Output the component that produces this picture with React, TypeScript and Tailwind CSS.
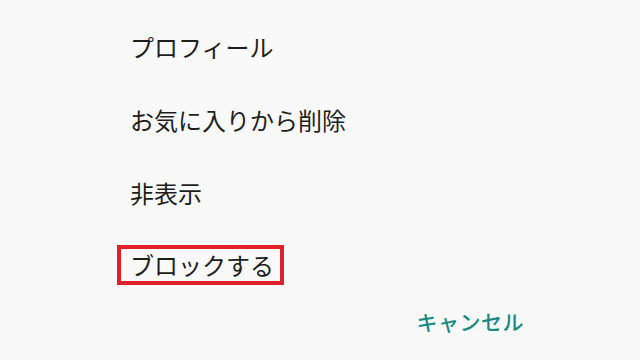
export default function App() {
  const items = ['プロフィール', 'お気に入りから削除', '非表示'];
  return (
    <div
      className="w-[640px] h-[360px] bg-[#f9f9f9] text-[#1e1e1e] overflow-hidden"
      style={{fontFamily: '"Noto Sans CJK JP", "Noto Sans", sans-serif'}}
    >
      <div className="flex flex-col pl-[130px] pt-[31px] gap-[41px]">
        {items.map(t => (
          <div key={t} className="text-[24px] leading-[32px]">{t}</div>
        ))}
        <div className="-mt-[5px] flex">
          <div className="-ml-[13px] h-[40px] flex items-center border-[4px] border-[#e0202a] pl-[9px] pr-[6px] text-[24px] leading-[32px]">
            ブロックする
          </div>
        </div>
      </div>
      <div className="flex justify-end pr-[116px] mt-[22px]">
        <button className="text-[21px] leading-[28px] font-medium text-[#1a8a80] tracking-[0.5px]">キャンセル</button>
      </div>
    </div>
  );
}
